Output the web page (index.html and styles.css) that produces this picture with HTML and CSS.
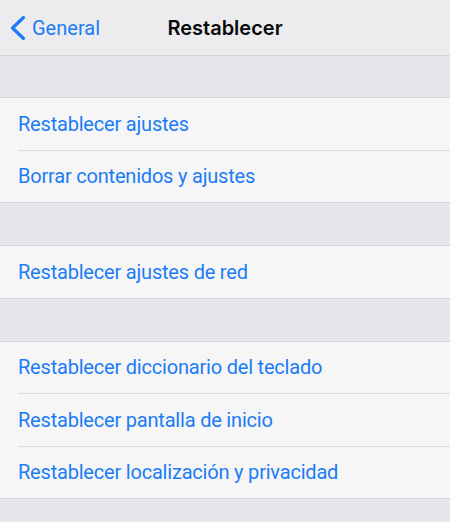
FILE: index.html
```html
<!DOCTYPE html>
<html lang="es">
<head>
    <meta charset="UTF-8">
    <meta name="viewport" content="width=device-width, initial-scale=1.0">
    <title>Restablecer</title>
    <link rel="stylesheet" href="styles.css">
</head>
<body>
    <div class="navbar">
        <a class="back" href="#">
            <svg class="chevron" width="16" height="24" viewBox="0 0 16 24">
                <path d="M13.5 1.5 L2.5 12 L13.5 22.5" fill="none" stroke="#1b7cf6" stroke-width="3.2" stroke-linecap="round" stroke-linejoin="round"/>
            </svg>
            <span>General</span>
        </a>
        <h1>Restablecer</h1>
    </div>

    <div class="group first">
        <a class="row" href="#">Restablecer ajustes</a>
        <a class="row" href="#">Borrar contenidos y ajustes</a>
    </div>

    <div class="group">
        <a class="row" href="#">Restablecer ajustes de red</a>
    </div>

    <div class="group">
        <a class="row" href="#">Restablecer diccionario del teclado</a>
        <a class="row" href="#">Restablecer pantalla de inicio</a>
        <a class="row" href="#">Restablecer localización y privacidad</a>
    </div>
</body>
</html>
```

FILE: styles.css
```css
body {
    margin: 0;
    font-family: Roboto, "Noto Sans", sans-serif;
    background-color: #e6e6eb;
    -webkit-font-smoothing: antialiased;
}
.navbar {
    position: relative;
    height: 55px;
    background-color: #ececef;
    border-bottom: 1px solid #d3d3d6;
    display: flex;
    align-items: center;
    justify-content: center;
}
.navbar h1 {
    margin: 0;
    font-family: Inter, sans-serif;
    font-size: 20px;
    font-weight: 600;
    color: #0a0a0a;
}
.back {
    position: absolute;
    left: 10px;
    top: 0;
    height: 55px;
    display: flex;
    align-items: center;
    gap: 6px;
    color: #1b7cf6;
    text-decoration: none;
    font-size: 20px;
}
.chevron {
    display: block;
}
.group {
    margin-top: 42px;
    background-color: #f6f6f6;
    border-top: 1px solid #d6d6d9;
    border-bottom: 1px solid #d6d6d9;
}
.group.first {
    margin-top: 41px;
}
.row {
    display: flex;
    align-items: center;
    height: 51.5px;
    padding-left: 18px;
    color: #1b7cf6;
    font-size: 20px;
    letter-spacing: -0.2px;
    text-decoration: none;
}
.row + .row {
    border-top: 1px solid #dcdcdf;
    margin-left: 18px;
    padding-left: 0;
}
```
